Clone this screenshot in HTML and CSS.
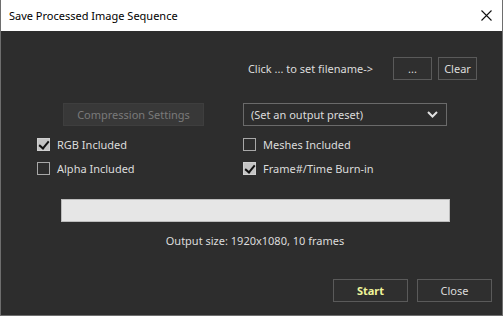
FILE: index.html
```html
<!DOCTYPE html>
<html lang="en">
<head>
    <meta charset="UTF-8">
    <title>Save Processed Image Sequence</title>
    <link rel="stylesheet" href="styles.css">
</head>
<body>

<div class="window">
    <div class="titlebar">
        <span class="title">Save Processed Image Sequence</span>
        <svg class="close-x" width="11" height="11" viewBox="0 0 11 11">
            <path d="M0.5 0.5 L10.5 10.5 M10.5 0.5 L0.5 10.5" stroke="#111" stroke-width="1.1" fill="none"/>
        </svg>
    </div>

    <div class="content">
        <div class="file-row">
            <span class="hint">Click ... to set filename-&gt;</span>
            <button class="btn btn-small">...</button>
            <button class="btn btn-small">Clear</button>
        </div>

        <div class="grid">
            <div class="cell">
                <button class="btn btn-disabled">Compression Settings</button>
            </div>
            <div class="cell">
                <div class="select">
                    <span>(Set an output preset)</span>
                    <svg width="11" height="7" viewBox="0 0 11 7">
                        <path d="M1 1 L5.5 5.5 L10 1" stroke="#e0e0e0" stroke-width="2" fill="none"/>
                    </svg>
                </div>
            </div>

            <label class="check checked"><span class="box"></span>RGB Included</label>
            <label class="check"><span class="box"></span>Meshes Included</label>
            <label class="check"><span class="box"></span>Alpha Included</label>
            <label class="check checked"><span class="box"></span>Frame#/Time Burn-in</label>
        </div>

        <div class="progress"></div>
        <div class="output-size">Output size: 1920x1080, 10 frames</div>

        <div class="actions">
            <button class="btn btn-wide btn-start">Start</button>
            <button class="btn btn-wide">Close</button>
        </div>
    </div>
</div>

</body>
</html>
```

FILE: styles.css
```css
body {
    margin: 0;
    padding: 0;
    font-family: 'Noto Sans', 'Open Sans', sans-serif;
    font-size: 11px;
    background-color: #2d2d2d;
}
.window {
    width: 503px;
    height: 316px;
    box-sizing: border-box;
    border: 1px solid #6e6e6e;
    border-top: none;
    display: flex;
    flex-direction: column;
    background-color: #2d2d2d;
    overflow: hidden;
}
.titlebar {
    height: 31px;
    flex: none;
    background-color: #fff;
    display: flex;
    align-items: center;
    justify-content: space-between;
    padding: 0 10px 0 8px;
    color: #000;
}
.title {
    font-size: 11px;
}
.content {
    flex: 1;
    display: flex;
    flex-direction: column;
    color: #dcdcdc;
}
.btn {
    font-family: inherit;
    font-size: 11px;
    color: #dcdcdc;
    background-color: #2f2f2f;
    border: 1px solid #5a5a5a;
    padding: 0;
    height: 23px;
}
.file-row {
    margin-top: 26px;
    display: flex;
    align-items: center;
    justify-content: flex-end;
    padding-right: 25px;
    gap: 6px;
}
.hint {
    margin-right: 14px;
}
.btn-small {
    width: 39px;
}
.grid {
    margin-top: 23px;
    display: grid;
    grid-template-columns: 206px 1fr;
    padding-left: 36px;
    row-gap: 11px;
}
.cell {
    height: 23px;
    margin-bottom: 1px;
}
.btn-disabled {
    margin-left: 26px;
    width: 141px;
    background-color: #383838;
    border-color: #3e3e3e;
    color: #7a7a7a;
}
.select {
    width: 204px;
    height: 23px;
    box-sizing: border-box;
    border: 1px solid #6a6a6a;
    display: flex;
    align-items: center;
    justify-content: space-between;
    padding: 0 8px 0 7px;
}
.check {
    display: flex;
    align-items: center;
    height: 13px;
    gap: 7px;
}
.box {
    width: 13px;
    height: 13px;
    box-sizing: border-box;
    border: 1px solid #a8a8a8;
    position: relative;
}
.checked .box {
    background-color: #c4c4c4;
    border-color: #d0d0d0;
}
.checked .box::after {
    content: "";
    position: absolute;
    left: 3px;
    top: 0px;
    width: 4px;
    height: 8px;
    border: solid #111;
    border-width: 0 2px 2px 0;
    transform: rotate(40deg);
}
.progress {
    margin: 24px 0 0 60px;
    width: 389px;
    height: 23px;
    box-sizing: border-box;
    background-color: #e6e6e6;
    border: 1px solid #bcbcbc;
}
.output-size {
    margin-top: 11px;
    text-align: center;
    width: 508px;
}
.actions {
    margin-top: 31px;
    display: flex;
    justify-content: flex-end;
    padding-right: 10px;
    gap: 9px;
}
.btn-wide {
    width: 75px;
}
.btn-start {
    color: #f0f59a;
    font-weight: bold;
}
```
